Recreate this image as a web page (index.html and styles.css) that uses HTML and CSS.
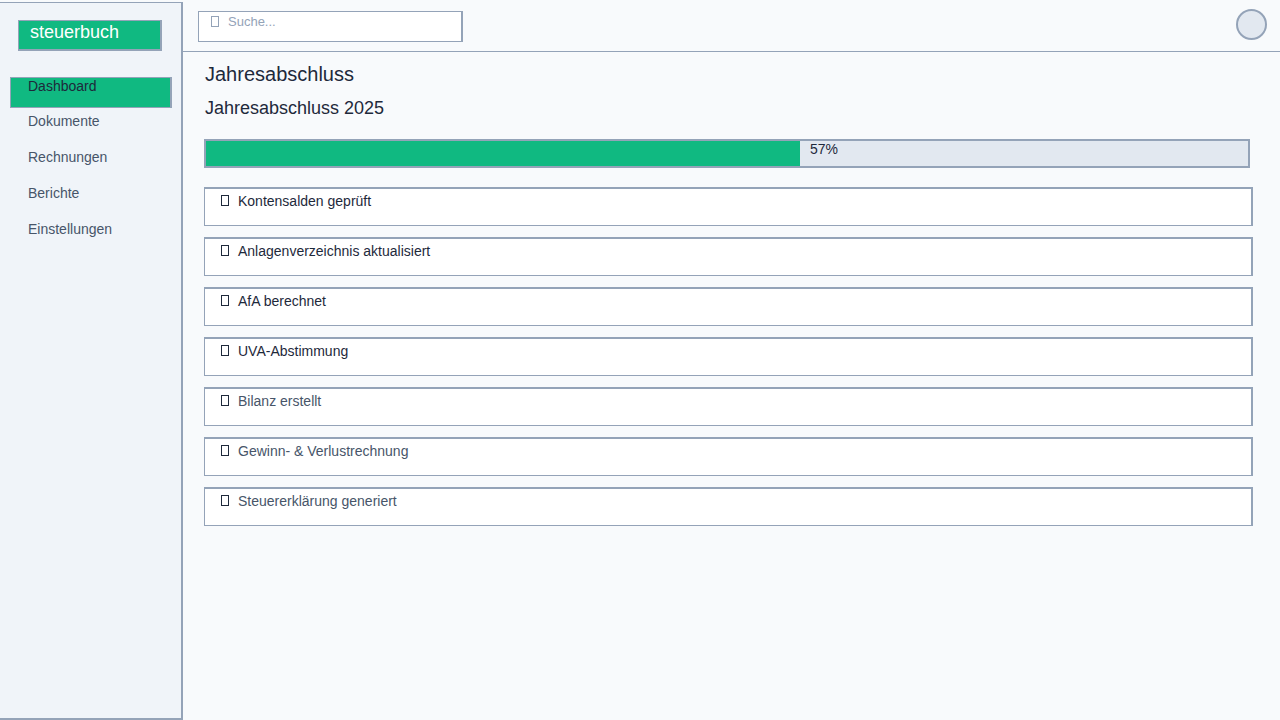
FILE: index.html
```html
<!DOCTYPE html>
<html lang="de">
<head>
<meta charset="utf-8">
<title>steuerbuch – Jahresabschluss</title>
<link rel="stylesheet" href="styles.css">
</head>
<body>
<div class="app">
  <aside class="sidebar">
    <div class="logo">steuerbuch</div>
    <nav class="nav">
      <a class="nav-item active">Dashboard</a>
      <a class="nav-item">Dokumente</a>
      <a class="nav-item">Rechnungen</a>
      <a class="nav-item">Berichte</a>
      <a class="nav-item">Einstellungen</a>
    </nav>
  </aside>
  <div class="main">
    <header class="topbar">
      <div class="search"><span class="box"></span><span class="placeholder">Suche...</span></div>
      <div class="avatar"></div>
    </header>
    <section class="content">
      <h1 class="title">Jahresabschluss</h1>
      <h2 class="subtitle">Jahresabschluss 2025</h2>
      <div class="progress">
        <div class="progress-fill" style="width:57%"></div>
        <span class="progress-label">57%</span>
      </div>
      <ul class="checklist">
        <li class="item done"><span class="box"></span>Kontensalden geprüft</li>
        <li class="item done"><span class="box"></span>Anlagenverzeichnis aktualisiert</li>
        <li class="item done"><span class="box"></span>AfA berechnet</li>
        <li class="item done"><span class="box"></span>UVA-Abstimmung</li>
        <li class="item open"><span class="box"></span>Bilanz erstellt</li>
        <li class="item open"><span class="box"></span>Gewinn- &amp; Verlustrechnung</li>
        <li class="item open"><span class="box"></span>Steuererklärung generiert</li>
      </ul>
    </section>
  </div>
</div>
</body>
</html>
```

FILE: styles.css
```css
* { box-sizing: border-box; }
html, body { margin: 0; padding: 0; }
body {
  font-family: "Liberation Sans", Arial, sans-serif;
  background: #f8fafc;
  color: #1e293b;
  width: 1280px;
  height: 720px;
  overflow: hidden;
}
.app {
  display: flex;
  height: 720px;
}
.sidebar {
  width: 183px;
  flex: 0 0 183px;
  background: #f0f4f9;
  border-top: 1px solid #94a3b8;
  border-right: 2px solid #94a3b8;
  border-bottom: 2px solid #94a3b8;
  margin-top: 2px;
  padding: 17px 9px 0 10px;
}
.logo {
  margin-left: 8px;
  width: 144px;
  height: 31px;
  background: #10b981;
  border: 1px solid #94a3b8;
  border-right-width: 2px;
  border-bottom-width: 2px;
  color: #ffffff;
  font-size: 18px;
  line-height: 22px;
  padding: 0 0 0 11px;
}
.nav {
  display: flex;
  flex-direction: column;
  margin-top: 26px;
}
.nav-item {
  display: block;
  height: 36px;
  padding: 0 0 0 18px;
  font-size: 14px;
  line-height: 17px;
  color: #475569;
}
.nav-item.active {
  height: 31px;
  margin-bottom: 5px;
  background: #10b981;
  border: 1px solid #94a3b8;
  border-right-width: 2px;
  color: #1e293b;
  padding-left: 17px;
}
.main {
  flex: 1;
  display: flex;
  flex-direction: column;
}
.topbar {
  height: 52px;
  flex: 0 0 52px;
  border-bottom: 1px solid #94a3b8;
  display: flex;
  align-items: center;
  justify-content: space-between;
  padding: 0 14px 0 15px;
}
.search {
  width: 265px;
  height: 31px;
  margin-top: 2px;
  background: #ffffff;
  border: 1px solid #94a3b8;
  border-right-width: 2px;
  display: flex;
  align-items: flex-start;
  padding: 1px 0 0 12px;
  gap: 9px;
}
.search .box {
  margin-top: 3px;
  border-color: #94a3b8;
}
.placeholder {
  font-size: 13px;
  line-height: 17px;
  color: #94a3b8;
}
.avatar {
  width: 31px;
  height: 31px;
  margin-top: -2px;
  border-radius: 50%;
  background: #e2e8f0;
  border: 2px solid #94a3b8;
}
.content {
  padding: 10px 28px 0 22px;
}
.title {
  margin: 0;
  font-size: 20px;
  line-height: 24px;
  font-weight: normal;
  color: #1e293b;
}
.subtitle {
  margin: 11px 0 0;
  font-size: 18px;
  line-height: 22px;
  font-weight: normal;
  color: #1e293b;
}
.progress {
  margin: 20px 0 0 -1px;
  width: 1046px;
  height: 29px;
  background: #e2e8f0;
  border: 2px solid #94a3b8;
  display: flex;
  align-items: flex-start;
}
.progress-fill {
  height: 100%;
  background: #10b981;
}
.progress-label {
  padding-left: 10px;
  font-size: 14px;
  line-height: 17px;
  color: #1e293b;
}
.checklist {
  list-style: none;
  margin: 19px 0 0 -1px;
  padding: 0;
  display: flex;
  flex-direction: column;
  gap: 11px;
}
.item {
  width: 1049px;
  height: 39px;
  background: #ffffff;
  border: 1px solid #94a3b8;
  border-top-width: 2px;
  border-right-width: 2px;
  display: flex;
  align-items: flex-start;
  gap: 9px;
  padding: 3px 0 0 16px;
  font-size: 14px;
  line-height: 18px;
}
.item.done { color: #1e293b; }
.item.open { color: #475569; }
.box {
  display: inline-block;
  flex: 0 0 auto;
  width: 8px;
  height: 11px;
  margin-top: 3px;
  border: 1px solid currentColor;
}
.item .box { border-color: #1e293b; }
```
